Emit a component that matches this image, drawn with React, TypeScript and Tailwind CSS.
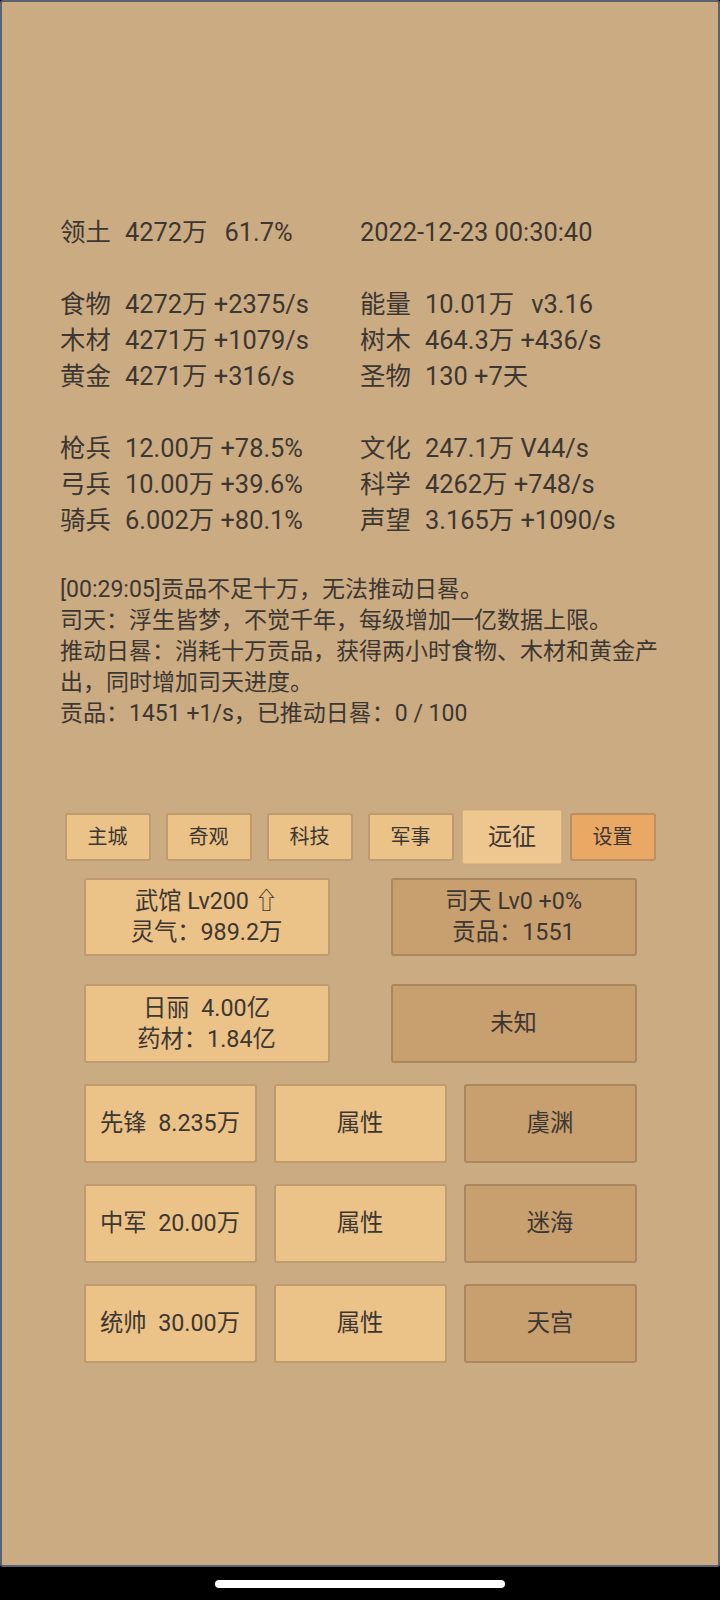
import React from 'react';

const FONT = { fontFamily: "Roboto, 'Noto Sans CJK SC', sans-serif" };

// [label, value] pairs for left / right column, null = blank line
// "|" marks the wider gap between two values
type Cell = [string, string] | null;
const STATS: [Cell, Cell][] = [
  [['领土', '4272万|61.7%'], ['', '2022-12-23 00:30:40']],
  [null, null],
  [['食物', '4272万 +2375/s'], ['能量', '10.01万|v3.16']],
  [['木材', '4271万 +1079/s'], ['树木', '464.3万 +436/s']],
  [['黄金', '4271万 +316/s'], ['圣物', '130 +7天']],
  [null, null],
  [['枪兵', '12.00万 +78.5%'], ['文化', '247.1万 V44/s']],
  [['弓兵', '10.00万 +39.6%'], ['科学', '4262万 +748/s']],
  [['骑兵', '6.002万 +80.1%'], ['声望', '3.165万 +1090/s']],
  [null, null],
];

const LOG = [
  '[00:29:05]贡品不足十万，无法推动日晷。',
  '司天：浮生皆梦，不觉千年，每级增加一亿数据上限。',
  '推动日晷：消耗十万贡品，获得两小时食物、木材和黄金产出，同时增加司天进度。',
  '贡品：1451 +1/s，已推动日晷：0 / 100',
];

const TABS = ['主城', '奇观', '科技', '军事', '远征', '设置'];

const StatCell: React.FC<{ cell: Cell }> = ({ cell }) => {
  if (!cell) return <div className="h-[36px]" />;
  const [label, value] = cell;
  const parts = value.split('|');
  return (
    <div className="h-[36px] flex whitespace-pre">
      {label && <span className="w-[65px] shrink-0">{label}</span>}
      {parts.map((p, i) => (
        <React.Fragment key={i}>
          {i > 0 && <span className="inline-block w-[17px] shrink-0" />}
          <span>{p}</span>
        </React.Fragment>
      ))}
    </div>
  );
};

const Card: React.FC<{ dark?: boolean; className?: string; children: React.ReactNode }> = ({
  dark,
  className = '',
  children,
}) => (
  <div
    className={`flex flex-col items-center justify-center rounded-[3px] border-2 text-[23.3px] leading-[31px] whitespace-pre text-[#3c3732] ${
      dark ? 'bg-[#c89f6f] border-[#ab875f]' : 'bg-[#ebc287] border-[#bf9b6f]'
    } ${className}`}
  >
    {children}
  </div>
);

export default function App() {
  return (
    <div className="w-[720px] h-[1600px] bg-black flex flex-col" style={FONT}>
      <div className="h-[1567px] bg-[#cbab82] border-2 border-[#5b6272] rounded-[3px] flex flex-col items-center">
        {/* stats */}
        <div className="mt-[212px] w-[600px] grid grid-cols-2 text-[25.4px] leading-[36px] text-[#3c3732]">
          {STATS.map(([l, r], i) => (
            <React.Fragment key={i}>
              <StatCell cell={l} />
              <StatCell cell={r} />
            </React.Fragment>
          ))}
        </div>

        {/* log */}
        <div className="w-[600px] text-[23px] leading-[31px] text-[#3c3732]">
          {LOG.map((line) => (
            <div key={line}>{line}</div>
          ))}
        </div>

        {/* tabs */}
        <div className="mt-[84px] flex gap-[15px]">
          {TABS.map((t) => {
            const active = t === '远征';
            const settings = t === '设置';
            return (
              <div
                key={t}
                className={`w-[86px] h-[48px] flex items-center justify-center rounded-[3px] border-2 text-[20px] text-[#3c3732] ${
                  active
                    ? 'scale-[1.2] bg-[#eec68f] border-[#cdaa7e]'
                    : settings
                    ? 'bg-[#eaa865] border-[#bd8f60]'
                    : 'bg-[#ebc287] border-[#bf9b6f]'
                }`}
              >
                {t}
              </div>
            );
          })}
        </div>

        {/* buildings */}
        <div className="mt-[17px] w-[553px] flex justify-between">
          <Card className="w-[246px] h-[78px]">
            <div>武馆 Lv200 ⇧</div>
            <div>灵气：989.2万</div>
          </Card>
          <Card dark className="w-[246px] h-[78px]">
            <div>司天 Lv0 +0%</div>
            <div>贡品：1551</div>
          </Card>
        </div>

        <div className="mt-[28px] w-[553px] flex justify-between">
          <Card className="w-[246px] h-[79px]">
            <div>日丽  4.00亿</div>
            <div>药材：1.84亿</div>
          </Card>
          <Card dark className="w-[246px] h-[79px]">
            未知
          </Card>
        </div>

        {/* army */}
        {[
          ['先锋  8.235万', '虞渊'],
          ['中军  20.00万', '迷海'],
          ['统帅  30.00万', '天宫'],
        ].map(([unit, place]) => (
          <div key={unit} className="mt-[21px] w-[553px] flex justify-between">
            <Card className="w-[173px] h-[79px]">{unit}</Card>
            <Card className="w-[173px] h-[79px]">属性</Card>
            <Card dark className="w-[173px] h-[79px]">
              {place}
            </Card>
          </div>
        ))}
      </div>

      {/* nav bar */}
      <div className="flex-1 flex justify-center">
        <div className="mt-[13px] w-[290px] h-[8px] rounded-full bg-white" />
      </div>
    </div>
  );
}
